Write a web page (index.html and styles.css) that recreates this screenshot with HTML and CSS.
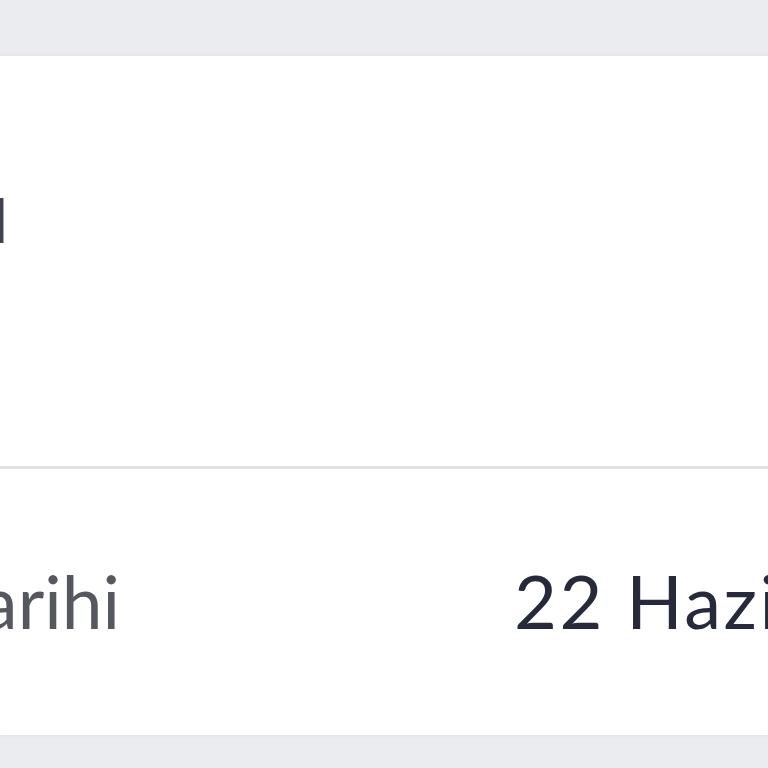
FILE: index.html
```html
<!DOCTYPE html>
<html lang="tr">
<head>
<meta charset="utf-8">
<link rel="stylesheet" href="styles.css">
</head>
<body>
<div class="page">
  <div class="card">
    <div class="head">
      <div class="head-clip"><span class="head-text">SİPARİŞ DETAYI</span></div>
    </div>
    <div class="divider"></div>
    <div class="row">
      <div class="label-box"><span class="label">Teslim Tarihi</span></div>
      <div class="value">22 Haziran 2024</div>
    </div>
  </div>
</div>
</body>
</html>
```
FILE: styles.css
```css
html, body {
  margin: 0;
  padding: 0;
  background: #ebecf0;
  overflow: hidden;
}
.page {
  width: 768px;
  height: 768px;
  padding-top: 56px;
  box-sizing: border-box;
  font-family: Lato, "Open Sans", sans-serif;
}
.card {
  background: #ffffff;
  height: 679px;
  box-shadow: 0 0 6px rgba(0, 0, 0, 0.05);
}
.head {
  padding-top: 127px;
  height: 283px;
}
.head-clip {
  width: 9px;
  display: flex;
  justify-content: flex-end;
}
.head-text {
  flex: none;
  white-space: nowrap;
  font-size: 62px;
  line-height: 73px;
  color: #3f4250;
}
.divider {
  height: 3px;
  background: #e2e2e5;
}
.row {
  display: flex;
  align-items: baseline;
  padding-top: 88px;
}
.label-box {
  width: 120px;
  display: flex;
  justify-content: flex-end;
  flex: none;
}
.label {
  flex: none;
  white-space: nowrap;
  font-size: 73px;
  line-height: 88px;
  color: #55585f;
}
.value {
  margin-left: 394px;
  white-space: nowrap;
  font-size: 74px;
  line-height: 88px;
  letter-spacing: 2.5px;
  color: #262a3b;
}
```
